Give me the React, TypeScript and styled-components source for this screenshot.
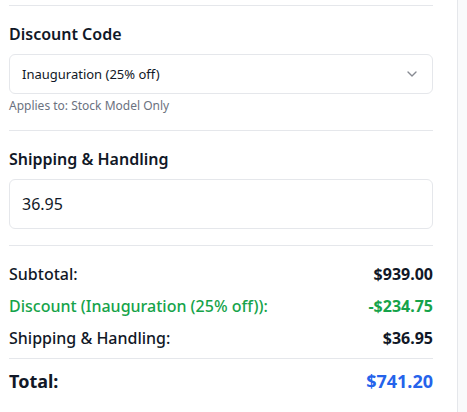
import React from "react";
import styled, { createGlobalStyle } from "styled-components";
import { ChevronDown } from "lucide-react";

const Global = createGlobalStyle`
  html, body { margin: 0; padding: 0; background: #f9fafb; }
  body { font-family: "Noto Sans", "Open Sans", sans-serif; color: #111827; }
  * { box-sizing: border-box; }
`;

const Layout = styled.div`
  display: flex;
  height: 412px;
  overflow: hidden;
`;

const Panel = styled.div`
  width: 458px;
  flex-shrink: 0;
  background: #ffffff;
  border-right: 1px solid #e5e7eb;
  padding: 5px 24px 0 9px;
  display: flex;
  flex-direction: column;
`;

const Divider = styled.hr<{ $tight?: boolean }>`
  border: 0;
  border-top: 1px solid #e5e7eb;
  margin: ${(p) => (p.$tight ? "8px 0" : "0")};
`;

const Section = styled.section`
  padding: 16px 0;
  display: flex;
  flex-direction: column;
`;

const Label = styled.div`
  font-size: 16px;
  line-height: 24px;
  font-weight: 600;
  margin-bottom: 8px;
`;

const SelectBox = styled.div`
  height: 40px;
  border: 1px solid #e5e7eb;
  border-radius: 6px;
  padding: 0 12px;
  display: flex;
  align-items: center;
  justify-content: space-between;
  font-size: 13px;
  color: #111827;
  svg { opacity: 0.5; }
`;

const Help = styled.div`
  margin-top: 4px;
  font-size: 12px;
  line-height: 16px;
  color: #6b7280;
`;

const Input = styled.input`
  height: 50px;
  border: 1px solid #e5e7eb;
  border-radius: 6px;
  padding: 0 12px;
  font-family: inherit;
  font-size: 16px;
  color: #111827;
  outline: none;
  width: 100%;
`;

const Summary = styled.div`
  padding-top: 16px;
  display: flex;
  flex-direction: column;
  gap: 8px;
`;

const Row = styled.div<{ $tone?: "green" }>`
  display: flex;
  justify-content: space-between;
  font-size: 16px;
  line-height: 24px;
  font-weight: 500;
  color: ${(p) => (p.$tone === "green" ? "#16a34a" : "#111827")};
`;

const Amount = styled.span`
  font-weight: 700;
`;

const TotalRow = styled.div`
  display: flex;
  justify-content: space-between;
  font-size: 18px;
  line-height: 28px;
  font-weight: 700;
`;

const TotalAmount = styled.span`
  color: #2563eb;
`;

export default function App() {
  return (
    <>
      <Global />
      <Layout>
        <Panel>
          <Divider />
          <Section>
            <Label>Discount Code</Label>
            <SelectBox>
              <span>Inauguration (25% off)</span>
              <ChevronDown size={16} />
            </SelectBox>
            <Help>Applies to: Stock Model Only</Help>
          </Section>
          <Divider />
          <Section>
            <Label>Shipping &amp; Handling</Label>
            <Input defaultValue="36.95" />
          </Section>
          <Divider />
          <Summary>
            <Row>
              <span>Subtotal:</span>
              <Amount>$939.00</Amount>
            </Row>
            <Row $tone="green">
              <span>Discount (Inauguration (25% off)):</span>
              <Amount>-$234.75</Amount>
            </Row>
            <Row>
              <span>Shipping &amp; Handling:</span>
              <Amount>$36.95</Amount>
            </Row>
          </Summary>
          <Divider $tight />
          <TotalRow>
            <span>Total:</span>
            <TotalAmount>$741.20</TotalAmount>
          </TotalRow>
        </Panel>
      </Layout>
    </>
  );
}
